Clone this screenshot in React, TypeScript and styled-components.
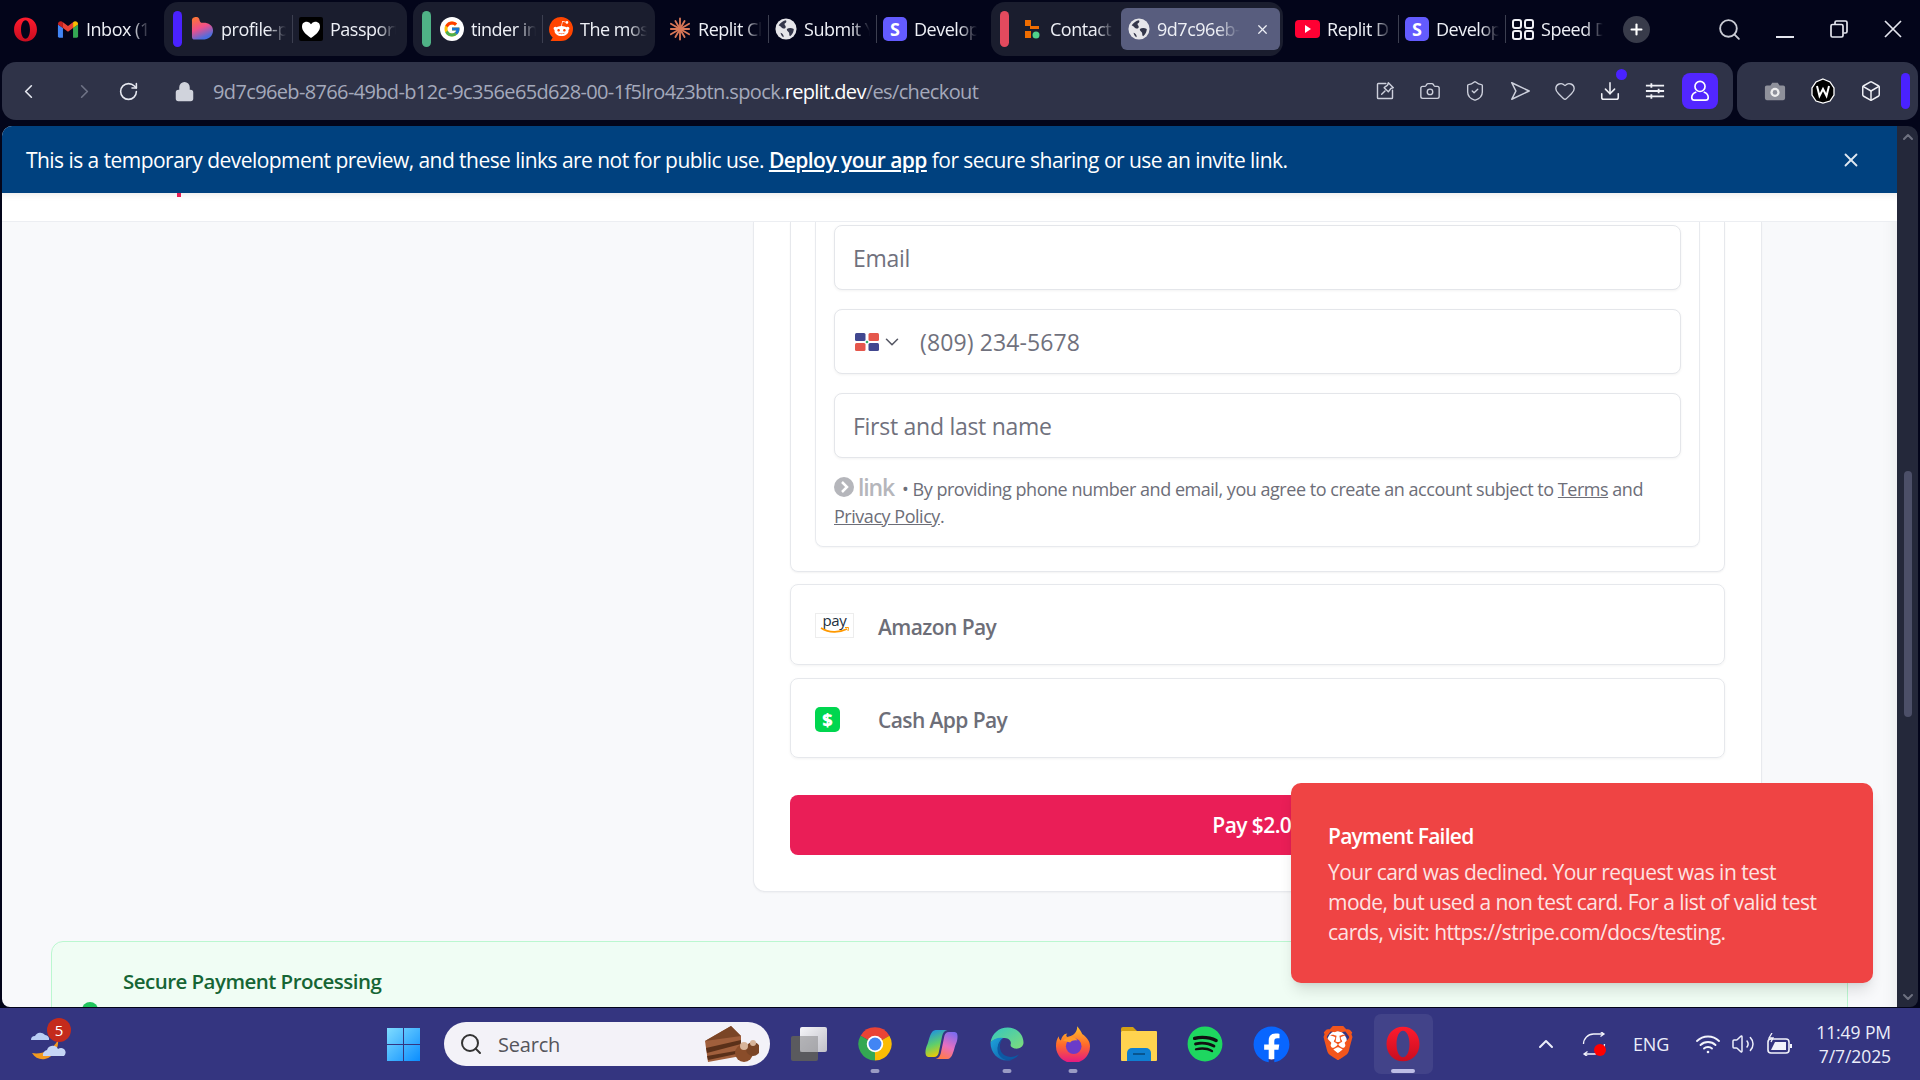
import React from "react";
import styled, { createGlobalStyle } from "styled-components";
import { ChevronLeft, ChevronRight, RotateCw, Lock, Camera, ShieldCheck, Heart, Download, X, Search, Box, ChevronUp, ChevronDown, Volume2, Plus } from "lucide-react";
import { FcGoogle } from "react-icons/fc";
import { FaRedditAlien, FaSpotify, FaFacebook } from "react-icons/fa";
import { SiBrave } from "react-icons/si";

const UI = `"Open Sans", "Noto Sans", sans-serif`;

const Global = createGlobalStyle`
  html, body { margin: 0; width: 1920px; height: 1080px; overflow: hidden; background: #03051a; }
  * { box-sizing: border-box; }
  #root { width: 1920px; height: 1080px; }
`;

const Win = styled.div`
  width: 1920px; height: 1080px; display: flex; flex-direction: column; background: #03051a;
  font-family: ${UI}; letter-spacing: -0.03em;
`;
const TabBar = styled.div`display: flex; align-items: center; height: 54px; margin-top: 2px; padding-left: 13px; flex: none;`;
const Group = styled.div<{ $w: number; $ml: number }>`
  display: flex; align-items: center; height: 54px; width: ${p => p.$w}px; margin-left: ${p => p.$ml}px;
  padding-left: 9px; background: #1a1d2e; border-radius: 14px; flex: none;
`;
const Accent = styled.span<{ $c: string; $mr: number }>`
  width: 9px; height: 36px; border-radius: 5px; background: ${p => p.$c}; margin-right: ${p => p.$mr}px; flex: none;
`;
const Label = styled.span<{ $w: number }>`
  display: block; width: ${p => p.$w}px; margin-left: 7px; font-size: 18px; color: #eef0f6; white-space: nowrap; overflow: hidden; flex: none;
  -webkit-mask-image: linear-gradient(90deg, #000 72%, transparent 100%);
  mask-image: linear-gradient(90deg, #000 72%, transparent 100%);
`;
const Sep = styled.span`width: 1px; height: 28px; background: #3c3f50; margin: 0 6px; flex: none;`;
const Tile = styled.span<{ $ml?: number }>`
  width: 24px; height: 24px; border-radius: 5px; background: #635bff; color: #fff; font-weight: 700; font-size: 18px; letter-spacing: 0;
  display: flex; align-items: center; justify-content: center; flex: none; margin-left: ${p => p.$ml ?? 0}px;
`;
const ActiveTab = styled.div`
  display: flex; align-items: center; width: 159px; height: 42px; margin-left: 7px; padding-left: 7px; background: #585d7e; border-radius: 6px; color: #fff; flex: none;
`;
const Spacer = styled.span<{ $w: number }>`width: ${p => p.$w}px; flex: none; display: block;`;
const PlusBtn = styled.span`
  width: 27px; height: 27px; border-radius: 50%; background: #383b4a; color: #fff; display: flex; align-items: center; justify-content: center; margin-left: 20px; flex: none;
`;
const WinCtl = styled.span<{ $ml: number }>`display: flex; align-items: center; justify-content: center; width: 26px; color: #e4e6ee; margin-left: ${p => p.$ml}px; flex: none;`;

const AddressRow = styled.div`display: flex; gap: 4px; height: 58px; margin-top: 6px; padding: 0 2px; flex: none;`;
const AddrBar = styled.div`
  width: 1731px; background: #2f3348; border-radius: 14px; display: flex; align-items: center; padding-left: 15px; color: #e6e8f0; flex: none;
`;
const NavIcon = styled.span<{ $ml: number; $c?: string }>`display: flex; margin-left: ${p => p.$ml}px; color: ${p => p.$c ?? "#e6e8f0"}; flex: none;`;
const Url = styled.div`margin-left: 18px; font-size: 20px; color: #a4a9bb; white-space: nowrap; letter-spacing: -0.032em;`;
const UrlHost = styled.span`color: #fff;`;
const Tools = styled.div`margin-left: auto; display: flex; align-items: center; padding-right: 15px;`;
const Slot = styled.span<{ $w?: number }>`position: relative; display: flex; align-items: center; justify-content: center; width: ${p => p.$w ?? 45}px; color: #cdd0dc; flex: none;`;
const Dot = styled.span`position: absolute; top: -11px; right: 5px; width: 11px; height: 11px; border-radius: 50%; background: #4a22ff;`;
const Profile = styled.span`width: 36px; height: 36px; margin-left: 5px; border-radius: 8px; background: #5226ff; color: #fff; display: flex; align-items: center; justify-content: center;`;
const SidePanel = styled.div`flex: 1; background: #2f3348; border-radius: 14px; display: flex; align-items: center; padding-left: 14px;`;
const SideBar = styled.span`width: 9px; height: 36px; border-radius: 5px; background: #4a22ff; margin-left: 6px;`;

const Viewport = styled.div`display: flex; height: 881px; margin: 6px 2px 1px; border-radius: 10px 10px 8px 8px; overflow: hidden; flex: none;`;
const Page = styled.div`position: relative; width: 1895px; height: 100%; background: #f8f9fb; overflow: hidden; flex: none; box-shadow: inset -18px 0 18px -18px rgba(0,0,0,.08);`;
const Banner = styled.div`
  height: 67px; background: #00417f; color: #fff; display: flex; align-items: center; justify-content: space-between; padding: 0 35px 0 24px;
  font-size: 21px; letter-spacing: -0.026em;
`;
const BannerLink = styled.span`font-weight: 600; text-decoration: underline;`;
const CloseBtn = styled.span`display: flex; color: #dfe7f1;`;
const Header = styled.div`height: 29px; background: #fff; border-bottom: 1px solid #eceef2; box-shadow: inset 0 8px 8px -8px rgba(0,0,0,.12);`;
const PinkMark = styled.span`display: block; width: 4px; height: 4px; margin-left: 175px; background: #e91e56;`;
const Main = styled.div`padding: 0 135px 0 751px;`;
const Card = styled.section`
  background: #fff; border: 1px solid #e8eaee; border-top: 0; border-radius: 0 0 12px 12px; padding: 0 36px 36px; box-shadow: 0 1px 2px rgba(0,0,0,.04);
`;
const MethodOpen = styled.div`border: 1px solid #e6e8ec; border-top: 0; border-radius: 0 0 8px 8px; padding: 0 24px 24px; box-shadow: 0 1px 2px rgba(0,0,0,.05);`;
const LinkBox = styled.div`border: 1px solid #e8eaee; border-top: 0; border-radius: 0 0 8px 8px; padding: 3px 18px 16px; box-shadow: 0 1px 2px rgba(0,0,0,.04);`;
const Field = styled.div`
  display: flex; align-items: center; height: 65px; padding-left: 18px; margin-bottom: 19px; border: 1px solid #e4e6ea; border-radius: 8px;
  background: #fff; color: #70717d; font-size: 23px; letter-spacing: -0.012em; box-shadow: 0 1px 3px rgba(0,0,0,.05);
`;
const PhoneText = styled.span`letter-spacing: 0.005em;`;
const FlagBox = styled.span`display: flex; align-items: center; gap: 2px; margin: 0 17px 0 2px; color: #555764;`;
const Legal = styled.div`margin-top: -1px; font-size: 18px; line-height: 27px; color: #6d6e78; letter-spacing: -0.026em;`;
const LinkLogo = styled.span`display: inline-flex; align-items: center; gap: 4px; font-size: 23px; font-weight: 600; color: #b5b6bb; vertical-align: -1px; margin-right: 8px; letter-spacing: -0.05em; line-height: 20px;`;
const Under = styled.span`text-decoration: underline;`;
const PayRow = styled.div<{ $h: number; $mt: number }>`
  display: flex; align-items: center; height: ${p => p.$h}px; margin-top: ${p => p.$mt}px; padding: 4px 0 0 24px; border: 1px solid #e6e8ec; border-radius: 8px;
  color: #6d6e78; font-size: 21px; font-weight: 600; letter-spacing: -0.028em; box-shadow: 0 1px 3px rgba(0,0,0,.05);
`;
const PayIcon = styled.span`width: 63px; display: flex; flex: none; margin-top: -2px;`;
const AmazonMark = styled.span`
  width: 39px; height: 25px; border: 1px solid #ededed; display: flex; flex-direction: column; align-items: center; font-size: 15px; font-weight: 400; line-height: 13px; color: #232f3e; letter-spacing: -0.02em;
`;
const CashMark = styled.span`
  width: 25px; height: 25px; border-radius: 5px; background: #00d64f; color: #fff; font-weight: 800; font-size: 18px; display: flex; align-items: center; justify-content: center; letter-spacing: 0;
`;
const PayBtn = styled.div`
  height: 60px; margin-top: 37px; border-radius: 8px; background: #ea1e57; color: #fff; font-size: 21px; font-weight: 600; display: flex; align-items: center; justify-content: center; letter-spacing: -0.028em;
`;
const Secure = styled.div`margin: 49px 49px 0; height: 200px; background: #f0fdf4; border: 1px solid #bbf7d0; border-radius: 12px; padding: 25px 0 0 71px; color: #166534; font-size: 20.5px; font-weight: 600; letter-spacing: -0.026em;`;
const SecureDot = styled.span`display: block; width: 16px; height: 16px; border-radius: 50%; background: #22c55e; margin: 7px 0 0 -41px;`;
const Toast = styled.div`
  position: absolute; right: 24px; bottom: 24px; width: 582px; height: 200px; padding: 38px 48px 36px 37px; border-radius: 10px; background: #ef4444; color: #fff; font-size: 21px; line-height: 30px;
  box-shadow: 0 10px 15px -3px rgba(0,0,0,.12), 0 4px 6px -4px rgba(0,0,0,.1); letter-spacing: -0.035em;
`;
const ToastTitle = styled.div`font-weight: 600; margin-bottom: 6px;`;
const ToastBody = styled.div`color: #fde3e3; letter-spacing: -0.025em;`;
const Scrollbar = styled.div`width: 21px; background: #24283a; display: flex; flex-direction: column; align-items: center; color: #6e7180; padding-top: 3px; flex: none; position: relative;`;
const Thumb = styled.span`display: block; width: 8px; height: 246px; border-radius: 4px; background: #4c4f68; margin-top: 326px; margin-bottom: 272px;`;

const Taskbar = styled.div`display: flex; align-items: center; height: 72px; background: #343580; padding: 0 29px 0 30px; color: #eceefa; flex: none;`;
const Weather = styled.span`position: relative; display: flex; width: 36px; height: 36px; margin-right: 320px; flex: none;`;
const Badge = styled.span`
  position: absolute; left: 17px; top: -8px; width: 24px; height: 24px; border-radius: 50%; background: #c42b1c; color: #fff; font-size: 15px; display: flex; align-items: center; justify-content: center; letter-spacing: 0;
`;
const SearchPill = styled.div`
  width: 326px; height: 44px; margin-left: 23px; border-radius: 22px; background: #f3f2f8; color: #55555b; display: flex; align-items: center; padding: 0 11px 0 15px; gap: 15px; font-size: 20px; letter-spacing: -0.01em; flex: none;
`;
const Cake = styled.span`margin-left: auto; display: flex;`;
const Dock = styled.div`display: flex; align-items: center; margin-left: 6px;`;
const DockItem = styled.span<{ $active?: boolean; $run?: boolean }>`
  position: relative; display: flex; align-items: center; justify-content: center; width: 66px; height: 60px; flex: none;
  &::before { content: ""; display: ${p => p.$active ? "block" : "none"}; position: absolute; left: 4px; right: 3px; top: 0; bottom: 0; border-radius: 7px; background: rgba(255,255,255,.07); }
  &::after { content: ""; display: ${p => p.$run || p.$active ? "block" : "none"}; position: absolute; bottom: 1px; left: 50%; transform: translateX(-50%); width: ${p => p.$active ? 24 : 9}px; height: 4px; border-radius: 2px; background: ${p => p.$active ? "#bdbde6" : "#9a9bc4"}; }
  & > svg { position: relative; }
`;
const Tray = styled.div`margin-left: auto; display: flex; align-items: center;`;
const TrayItem = styled.span<{ $w: number }>`position: relative; display: flex; justify-content: center; width: ${p => p.$w}px; flex: none; font-size: 18px; letter-spacing: -0.01em;`;
const RedDot = styled.span`position: absolute; right: 7px; bottom: 0; width: 12px; height: 12px; border-radius: 50%; background: #f00;`;
const Clock = styled.div`margin-left: 10px; width: 80px; text-align: right; font-size: 17.5px; line-height: 24px; letter-spacing: -0.005em; white-space: nowrap;`;

const OperaO = ({ s = 25, id = "op" }: { s?: number; id?: string }) => (
  <svg width={s} height={s} viewBox="0 0 24 24" style={{ flex: "none" }}>
    <defs><linearGradient id={id} x1="0" y1="0" x2="0" y2="1"><stop offset="0" stopColor="#ff1b2d"/><stop offset="1" stopColor="#c80d20"/></linearGradient></defs>
    <path fillRule="evenodd" fill={`url(#${id})`} d="M12 0.5C5.500 0.500 1 5.600 1 12S5.500 23.500 12 23.500 23 18.400 23 12 18.500 0.500 12 0.500zM12 3.200C9.500 3.200 7.700 7 7.700 12S9.500 20.800 12 20.800 16.300 17 16.300 12 14.500 3.200 12 3.200z"/>
  </svg>
);
const Gmail = () => (
  <svg width="22" height="22" viewBox="0 0 24 24" style={{ flex: "none" }}>
    <path fill="#4285f4" d="M1 7v13a1.500 1.500 0 0 0 1.500 1.500H6.500V11z"/><path fill="#34a853" d="M17.500 11v10.500h4A1.500 1.500 0 0 0 23 20V7z"/>
    <path fill="#ea4335" d="M6.500 11 12 15l5.500-4V4.500L12 8.800 6.500 4.500z"/><path fill="#c5221f" d="M1 7c0-3 3-4.500 5.500-2.500V11z"/><path fill="#fbbc04" d="M23 7c0-3-3-4.500-5.500-2.500V11z"/>
  </svg>
);
const GradHeart = () => (
  <svg width="23" height="24" viewBox="0 0 24 24" style={{ flex: "none" }}>
    <defs><linearGradient id="gh" x1="0" y1="0" x2="0.4" y2="1"><stop offset="0" stopColor="#ff7a2a"/><stop offset=".55" stopColor="#ef4f8a"/><stop offset="1" stopColor="#4a6ee0"/></linearGradient></defs>
    <path fill="url(#gh)" d="M1 4a4 4 0 0 1 8-1c.5 1.500 1 2.500 3 2.500 5-.5 11 2 11 8 0 6-5 9.500-11 9.500H4a3 3 0 0 1-3-3z"/>
  </svg>
);
const Passport = () => (
  <svg width="24" height="24" viewBox="0 0 24 24" style={{ flex: "none" }}><rect width="24" height="24" rx="2" fill="#000"/><path fill="#fff" d="M12 21C6 17 3 13.500 3 9.500a4.800 4.800 0 0 1 9-2.300 4.800 4.800 0 0 1 9 2.300C21 13.500 18 17 12 21z"/></svg>
);
const GoogleIc = () => (
  <svg width="24" height="24" viewBox="0 0 24 24" style={{ flex: "none" }}><circle cx="12" cy="12" r="12" fill="#fff"/><foreignObject x="3" y="3" width="18" height="18"><FcGoogle size={18} /></foreignObject></svg>
);
const Reddit = () => (
  <svg width="24" height="24" viewBox="0 0 24 24" style={{ flex: "none" }}><path fill="#ff4500" d="M12 0a12 12 0 0 1 0 24H1.500l2.200-3.500A12 12 0 0 1 12 0z"/><foreignObject x="4" y="3" width="17" height="17"><FaRedditAlien size={17} color="#fff" /></foreignObject></svg>
);
const Sunburst = () => (
  <svg width="22" height="24" viewBox="0 0 24 24" style={{ flex: "none" }}>
    {Array.from({ length: 12 }).map((_, i) => {
      const a = (i / 12) * Math.PI * 2;
      const r = i % 2 ? 11.5 : 10;
      return <line key={i} x1="12" y1="12" x2={12 + Math.cos(a) * r} y2={12 + Math.sin(a) * r} stroke="#d97757" strokeWidth="2" strokeLinecap="round" />;
    })}
  </svg>
);
const Globe = () => (
  <svg width="22" height="22" viewBox="0 0 24 24" style={{ flex: "none" }}>
    <circle cx="12" cy="12" r="11.500" fill="#e6e6ea"/>
    <path fill="#33364a" d="M4 8c2-3 5-5 8-5.500 1 1.500 0 3-1.500 3.500-.5 2 2 2.500 1 4.500-1.500 2-4 .5-5-1zM13 12c2-1.500 5-1.500 7.500 0 0 3-1.500 6-4 8-1.500-1-.5-3-1.500-4.500-1-1.500-2.500-1.500-2-3.500zM6 16c2 .5 3.500 2 3.500 5-1.500-.5-3-2.500-3.500-5z"/>
  </svg>
);
const ContactIc = () => (
  <svg width="16" height="24" viewBox="0 0 16 24" style={{ flex: "none" }}>
    <rect x="1" y="3" width="6" height="6" fill="#ef6c00"/><rect x="6" y="9" width="9" height="3" fill="#ef6c00"/><rect x="1" y="14" width="6" height="7" fill="#ef6c00"/><circle cx="12" cy="18" r="3.500" fill="#4fd18b"/>
  </svg>
);
const YT = () => (
  <svg width="25" height="24" viewBox="0 0 25 24" style={{ flex: "none" }}><rect y="3" width="25" height="18" rx="4" fill="#ff0033"/><path d="M10 8l6 4-6 4z" fill="#fff"/></svg>
);
const Speed = () => (
  <svg width="22" height="24" viewBox="0 0 22 24" fill="none" stroke="#f0f1f6" strokeWidth="2" style={{ flex: "none" }}>
    <rect x="1" y="3" width="8" height="8" rx="2"/><rect x="13" y="3" width="8" height="8" rx="2"/><rect x="1" y="14" width="8" height="8" rx="2"/><rect x="13" y="14" width="8" height="8" rx="2"/>
  </svg>
);
const PinBox = () => (
  <svg width="20" height="20" viewBox="0 0 24 24" fill="none" stroke="currentColor" strokeWidth="1.700" strokeLinejoin="round" strokeLinecap="round">
    <path d="M13 3H4a1 1 0 0 0-1 1v16a1 1 0 0 0 1 1h16a1 1 0 0 0 1-1v-9"/><path d="M8 16l4-4M16 2l6 6-3 1-3 4-5-5 4-3z"/>
  </svg>
);
const SendIc = () => (
  <svg width="22" height="22" viewBox="0 0 24 24" fill="none" stroke="currentColor" strokeWidth="1.700" strokeLinejoin="round"><path d="M3 3l19 9-19 9 4.500-9z"/></svg>
);
const Sliders = () => (
  <svg width="20" height="20" viewBox="0 0 22 22" fill="none" stroke="#f0f1f6" strokeWidth="2"><path d="M1 5h20M1 11h20M1 17h20M7 2.500v5M15 8.500v5M7 14.500v5"/></svg>
);
const UserIc = () => (
  <svg width="20" height="22" viewBox="0 0 20 24" fill="none" stroke="currentColor" strokeWidth="1.800"><circle cx="10" cy="7" r="5.500"/><path d="M6 13c-3 1-5 3-5 6 0 2 1.500 3 3 3h12c1.500 0 3-1 3-3 0-3-2-5-5-6"/></svg>
);
const CamSolid = () => (
  <svg width="22" height="22" viewBox="0 0 24 24"><path fill="#8f919b" d="M3 6h4l2-3h6l2 3h4a2 2 0 0 1 2 2v12a2 2 0 0 1-2 2H3a2 2 0 0 1-2-2V8a2 2 0 0 1 2-2z"/><circle cx="12" cy="13.500" r="5" fill="#eee"/><circle cx="12" cy="13.500" r="2.500" fill="#8f919b"/></svg>
);
const WBadge = () => (
  <svg width="24" height="26" viewBox="0 0 24 26"><path d="M12 1l7 3 4 6v7l-4 6-7 2-7-2-4-6v-7l4-6z" fill="#000" stroke="#fff" strokeWidth="1.300"/><path d="M6 8l2.500 10L12 11l3.500 7L18 8" fill="none" stroke="#fff" strokeWidth="2"/></svg>
);
const FlagDR = () => (
  <svg width="24" height="18" viewBox="0 0 24 18"><rect x="0" y="0" width="10.500" height="8" rx="1.500" fill="#41478f"/><rect x="13.500" y="0" width="10.500" height="8" rx="1.500" fill="#e5574c"/><rect x="0" y="10" width="10.500" height="8" rx="1.500" fill="#e5574c"/><rect x="13.500" y="10" width="10.500" height="8" rx="1.500" fill="#41478f"/><circle cx="12" cy="9" r="1.300" fill="#2fb06a"/></svg>
);
const LinkCircle = () => (
  <svg width="20" height="20" viewBox="0 0 20 20"><circle cx="10" cy="10" r="10" fill="#b5b6bb"/><path d="M8 5l5 5-5 5" fill="none" stroke="#fff" strokeWidth="2.500"/></svg>
);
const AmazonArrow = () => (
  <svg width="30" height="7" viewBox="0 0 30 7"><path d="M1 1c8 5 18 5 26 1" fill="none" stroke="#ff9900" strokeWidth="1.600"/><path d="M25 .500l3.500 0-.5 3.500" fill="none" stroke="#ff9900" strokeWidth="1"/></svg>
);
const WeatherIc = () => (
  <svg width="36" height="34" viewBox="0 0 36 34">
    <path d="M28 14c1 8-4 17-13 19-5 1-10-1-13-6 8 2 20-2 26-13z" fill="#f29a1f"/>
    <path d="M1 14a4 4 0 0 1 4-4 6 6 0 0 1 10-1 4 4 0 0 1 4 5z" fill="#b9cdf4"/>
    <path d="M13 30a5 5 0 0 1 4-6 6 6 0 0 1 11-1 4.500 4.500 0 0 1 6 7z" fill="#c5d6f6"/>
  </svg>
);
const WinLogo = () => (
  <svg width="35" height="35" viewBox="0 0 35 35" style={{ flex: "none" }}>
    <defs><linearGradient id="wl" x1="0" y1="0" x2="1" y2="1"><stop offset="0" stopColor="#7fdcff"/><stop offset="1" stopColor="#0a8dff"/></linearGradient></defs>
    <path fill="url(#wl)" d="M1 1h16v16H1zM18 1h16v16H18zM1 18h16v16H1zM18 18h16v16H18z"/>
  </svg>
);
const CakeIc = () => (
  <svg width="54" height="38" viewBox="0 0 54 38">
    <path d="M0 16 26 1l10 10v20L3 37z" fill="#a05f3c"/><path d="M0 16 26 1l10 10z" fill="#7a4526"/><path d="M1 23l35-8v4L2 28z" fill="#5a3019"/><path d="M2 31l34-6v3L3 35z" fill="#5a3019"/>
    <circle cx="39" cy="28" r="9" fill="#8a4d2a"/><circle cx="48" cy="24" r="7" fill="#7a4526"/><circle cx="39" cy="21" r="4" fill="#d7b49a"/><circle cx="48" cy="18" r="3" fill="#d7b49a"/>
  </svg>
);
const TaskView = () => (
  <svg width="36" height="34" viewBox="0 0 36 34">
    <defs><linearGradient id="tv" x1="0" y1="0" x2="1" y2="1"><stop offset="0" stopColor="#fff"/><stop offset="1" stopColor="#c8c8cc"/></linearGradient></defs>
    <rect x="0" y="9" width="27" height="25" rx="2" fill="#5a5a5e"/><rect x="9" y="0" width="27" height="25" rx="2" fill="url(#tv)" opacity=".95"/><rect x="9" y="9" width="18" height="16" fill="#8e8e92" opacity=".6"/>
  </svg>
);
const Chrome = () => (
  <svg width="36" height="36" viewBox="0 0 24 24">
    <path fill="#ea4335" d="M12 12 21.600 6.500A11 11 0 0 0 2.400 6.500z"/><path fill="#fbbc04" d="M12 12 21.600 6.500A11 11 0 0 1 12 23z"/><path fill="#34a853" d="M12 12V23A11 11 0 0 1 2.400 6.500z"/>
    <circle cx="12" cy="12" r="5.500" fill="#fff"/><circle cx="12" cy="12" r="4.300" fill="#4285f4"/>
  </svg>
);
const Copilot = () => (
  <svg width="35" height="35" viewBox="0 0 24 24">
    <defs>
      <linearGradient id="c1" x1="0.2" y1="0" x2="0.5" y2="1"><stop offset="0" stopColor="#1a8fe8"/><stop offset=".55" stopColor="#5fcf6a"/><stop offset="1" stopColor="#f5c800"/></linearGradient>
      <linearGradient id="c2" x1="0.8" y1="0" x2="0.4" y2="1"><stop offset="0" stopColor="#7b6bf0"/><stop offset=".55" stopColor="#e86fc0"/><stop offset="1" stopColor="#ff7a4c"/></linearGradient>
    </defs>
    <path fill="url(#c1)" d="M8 2h8c-2 .5-3 2-3.500 4L10 18c-.5 1.500-1.500 2.500-3 2.500H3c-1.500 0-2-1.500-2-3 0-2 .5-4 1.500-6C3.500 8.500 4.500 2 8 2z"/>
    <path fill="url(#c2)" d="M16 22H8c2-.5 3-2 3.500-4L14 6c.5-1.500 1.500-2.500 3-2.500h4c1.500 0 2 1.500 2 3 0 2-.5 4-1.500 6-1 3-2 9.500-5.500 9.500z"/>
  </svg>
);
const Edge = () => (
  <svg width="36" height="36" viewBox="0 0 24 24">
    <defs>
      <linearGradient id="e1" x1="0" y1="0" x2="1" y2="1"><stop offset="0" stopColor="#33c6c0"/><stop offset="1" stopColor="#7fdc7a"/></linearGradient>
      <linearGradient id="e2" x1="0" y1="0" x2="1" y2="1"><stop offset="0" stopColor="#1ea4dd"/><stop offset="1" stopColor="#0c59a4"/></linearGradient>
    </defs>
    <path fill="url(#e1)" d="M1 11C2 5 6.500 1 12.500 1 18.500 1 23 5.500 23 11c0 3-3 4.500-6 4-2-.5-3-1.500-2.500-3 .5-1.500-1-4-4-4C6 8 3 9 1 11z"/>
    <path fill="url(#e2)" d="M1 11c2-2.500 5-3.500 8.500-3-3 2-4.500 6-3 10 1.500 3.500 5 5 9 4.500-1.500.5-2.500.5-3.500.5C6 23 1 18 1 11z"/>
    <path fill="#0c59a4" d="M9.500 8c-2 2-3 6-1.500 9 2 3.500 7 5 12 2-1.500 2-3.500 3-5.500 3.500-3.500.5-7-1-8.500-4.500C5 14 6.500 10 9.500 8z"/>
  </svg>
);
const Firefox = () => (
  <svg width="34" height="36" viewBox="0 0 24 25">
    <defs><linearGradient id="ff" x1="0.5" y1="0" x2="0.5" y2="1"><stop offset="0" stopColor="#ffc32c"/><stop offset=".5" stopColor="#ff6a2b"/><stop offset="1" stopColor="#e31587"/></linearGradient></defs>
    <path fill="url(#ff)" d="M15 0c2 2.500 3 4 3.500 5.500C22 8 24 11 24 14a12 12 0 0 1-24 0c0-3 .5-5 2-7 0 1.500.5 2.500 1.500 3C4 7 6 5 8 5c-1 1-1 2 0 2.500 3-.5 7-2 7-7.500z"/>
    <circle cx="12.500" cy="14" r="5.500" fill="#6a3bc9"/><path d="M5 10c2-2 5-3 8-2 1 .500 2 1 2 2-2-.5-4 0-5 1.500z" fill="#ff9a2b"/>
  </svg>
);
const Folder = () => (
  <svg width="36" height="34" viewBox="0 0 36 34">
    <path d="M0 2a2 2 0 0 1 2-2h10l4 4h-16z" fill="#d4a012"/><rect x="0" y="4" width="36" height="30" rx="1" fill="#ffd34f"/><path d="M6 34v-8a5 5 0 0 1 5-5h14a5 5 0 0 1 5 5v8z" fill="#0f7fd1"/><rect x="12" y="26" width="12" height="2" fill="#08558f"/>
  </svg>
);
const Spotify = () => (
  <svg width="36" height="36" viewBox="0 0 36 36"><circle cx="18" cy="18" r="15" fill="#111"/><foreignObject width="36" height="36"><FaSpotify size={36} color="#1ed760" /></foreignObject></svg>
);
const Fb = () => (
  <svg width="37" height="37" viewBox="0 0 37 37"><circle cx="18.500" cy="18.500" r="15" fill="#fff"/><foreignObject width="37" height="37"><FaFacebook size={37} color="#0866ff" /></foreignObject></svg>
);
const Brave = () => (
  <svg width="32" height="36" viewBox="0 0 32 36"><ellipse cx="16" cy="16" rx="10" ry="11" fill="#fff"/><foreignObject width="32" height="36"><SiBrave size={34} color="#f2551c" /></foreignObject></svg>
);
const Sync = () => (
  <svg width="24" height="24" viewBox="0 0 24 24" fill="none" stroke="#f2f3fb" strokeWidth="1.300"><path d="M1.500 12A10 10 0 0 1 11.500 2H22M18.500-.5l3.500 2.500-3.500 2.500M22.500 12a10 10 0 0 1-10 10H2M5.500 19.500 2 22l3.500 2.500"/></svg>
);
const WifiIc = () => (
  <svg width="24" height="20" viewBox="0 0 24 20" fill="none" stroke="#f2f3fb" strokeWidth="1.800" strokeLinecap="round"><path d="M1 7c6-6 16-6 22 0M4.500 11c4-4 11-4 15 0M8 14.500c2-2 6-2 8 0"/><circle cx="12" cy="18" r="1.300" fill="#f2f3fb" stroke="none"/></svg>
);
const BatteryIc = () => (
  <svg width="26" height="22" viewBox="0 0 26 22" fill="none" stroke="#f2f3fb" strokeWidth="1.600"><rect x="1" y="6" width="21" height="14" rx="3"/><rect x="23" y="11" width="2" height="4" fill="#f2f3fb" stroke="none"/><path d="M4 17l4-8h11v8z" fill="#f2f3fb" stroke="none"/><path d="M5 0L2 5h4L4 9" strokeWidth="1.300"/></svg>
);

export default function App() {
  return (
    <>
      <Global />
      <Win>
        <TabBar>
          <OperaO id="op1" />
          <Spacer $w={19} />
          <Gmail /><Label $w={64}>Inbox (1)</Label>
          <Group $w={243} $ml={14}>
            <Accent $c="#4a22ff" $mr={9} />
            <GradHeart /><Label $w={65}>profile-page</Label><Sep />
            <Passport /><Label $w={66}>Passport</Label>
          </Group>
          <Group $w={242} $ml={6}>
            <Accent $c="#4fb286" $mr={9} />
            <GoogleIc /><Label $w={65}>tinder in</Label><Sep />
            <Reddit /><Label $w={67}>The most</Label>
          </Group>
          <Spacer $w={14} />
          <Sunburst /><Label $w={64}>Replit Cl</Label><Sep />
          <Globe /><Label $w={66}>Submit Y</Label><Sep />
          <Tile>S</Tile><Label $w={63}>Develop</Label>
          <Group $w={292} $ml={14}>
            <Accent $c="#e24a5e" $mr={15} />
            <ContactIc /><Spacer $w={3} /><Label $w={64}>Contact</Label>
            <ActiveTab>
              <Globe /><Label $w={83}>9d7c96eb-8</Label>
              <Spacer $w={15} /><X size={15} color="#eef0f6" />
            </ActiveTab>
          </Group>
          <Spacer $w={12} />
          <YT /><Spacer $w={-2} /><Label $w={65}>Replit D</Label><Sep />
          <Tile>S</Tile><Label $w={63}>Develop</Label><Sep />
          <Speed /><Label $w={62}>Speed D</Label>
          <PlusBtn><Plus size={17} strokeWidth={3} /></PlusBtn>
          <WinCtl $ml={66}><Search size={25} color="#c9cbd4" strokeWidth={1.800} /></WinCtl>
          <WinCtl $ml={30}><svg width="18" height="20" viewBox="0 0 18 20"><rect y="17" width="18" height="2" fill="#e4e6ee" /></svg></WinCtl>
          <WinCtl $ml={28}><svg width="18" height="18" viewBox="0 0 18 18" fill="none" stroke="#e4e6ee" strokeWidth="1.700"><rect x="1" y="4.500" width="12" height="12.500" rx="1.500" /><path d="M5 4V2.500A1.500 1.500 0 0 1 6.500 1H15.500A1.500 1.500 0 0 1 17 2.500V11.500A1.500 1.500 0 0 1 15.500 13H13.500" /></svg></WinCtl>
          <WinCtl $ml={28}><svg width="18" height="18" viewBox="0 0 18 18" stroke="#e4e6ee" strokeWidth="1.700"><path d="M1 1l16 16M17 1L1 17" /></svg></WinCtl>
        </TabBar>
        <AddressRow>
          <AddrBar>
            <NavIcon $ml={0}><ChevronLeft size={23} strokeWidth={1.700} /></NavIcon>
            <NavIcon $ml={33} $c="#6f7386"><ChevronRight size={23} strokeWidth={1.700} /></NavIcon>
            <NavIcon $ml={22}><RotateCw size={21} strokeWidth={1.800} /></NavIcon>
            <NavIcon $ml={35} $c="#d0d3dc"><Lock size={21} fill="#d0d3dc" strokeWidth={2} /></NavIcon>
            <Url>9d7c96eb-8766-49bd-b12c-9c356e65d628-00-1f5lro4z3btn.spock.<UrlHost>replit.dev</UrlHost>/es/checkout</Url>
            <Tools>
              <Slot><PinBox /></Slot>
              <Slot><Camera size={22} strokeWidth={1.500} /></Slot>
              <Slot><ShieldCheck size={22} strokeWidth={1.500} /></Slot>
              <Slot><SendIc /></Slot>
              <Slot><Heart size={22} strokeWidth={1.500} /></Slot>
              <Slot><Download size={22} strokeWidth={1.700} color="#f0f1f6" /><Dot /></Slot>
              <Slot><Sliders /></Slot>
              <Profile><UserIc /></Profile>
            </Tools>
          </AddrBar>
          <SidePanel>
            <Slot $w={48}><CamSolid /></Slot>
            <Slot $w={48}><WBadge /></Slot>
            <Slot $w={48}><Box size={22} strokeWidth={1.600} color="#f0f1f6" /></Slot>
            <SideBar />
          </SidePanel>
        </AddressRow>
        <Viewport>
          <Page>
            <Banner>
              <span>This is a temporary development preview, and these links are not for public use. <BannerLink>Deploy your app</BannerLink> for secure sharing or use an invite link.</span>
              <CloseBtn><X size={22} /></CloseBtn>
            </Banner>
            <Header><PinkMark /></Header>
            <Main>
              <Card>
                <MethodOpen>
                  <LinkBox>
                    <Field>Email</Field>
                    <Field><FlagBox><FlagDR /><ChevronDown size={22} strokeWidth={1.700} /></FlagBox><PhoneText>(809) 234-5678</PhoneText></Field>
                    <Field>First and last name</Field>
                    <Legal>
                      <LinkLogo><LinkCircle />link</LinkLogo>• By providing phone number and email, you agree to create an account subject to <Under>Terms</Under> and <Under>Privacy Policy</Under>.
                    </Legal>
                  </LinkBox>
                </MethodOpen>
                <PayRow $h={81} $mt={12}>
                  <PayIcon><AmazonMark>pay<AmazonArrow /></AmazonMark></PayIcon>Amazon Pay
                </PayRow>
                <PayRow $h={80} $mt={13}>
                  <PayIcon><CashMark>$</CashMark></PayIcon>Cash App Pay
                </PayRow>
                <PayBtn>Pay $2.00</PayBtn>
              </Card>
            </Main>
            <Secure>Secure Payment Processing<SecureDot /></Secure>
            <Toast>
              <ToastTitle>Payment Failed</ToastTitle>
              <ToastBody>Your card was declined. Your request was in test mode, but used a non test card. For a list of valid test cards, visit: https://stripe.com/docs/testing.</ToastBody>
            </Toast>
          </Page>
          <Scrollbar>
            <ChevronUp size={16} strokeWidth={3} />
            <Thumb />
            <ChevronDown size={16} strokeWidth={3} />
          </Scrollbar>
        </Viewport>
        <Taskbar>
          <Weather><WeatherIc /><Badge>5</Badge></Weather>
          <WinLogo />
          <SearchPill>
            <Search size={24} strokeWidth={2} color="#333" />Search<Cake><CakeIc /></Cake>
          </SearchPill>
          <Dock>
            <DockItem><TaskView /></DockItem>
            <DockItem $run><Chrome /></DockItem>
            <DockItem><Copilot /></DockItem>
            <DockItem $run><Edge /></DockItem>
            <DockItem $run><Firefox /></DockItem>
            <DockItem><Folder /></DockItem>
            <DockItem><Spotify /></DockItem>
            <DockItem><Fb /></DockItem>
            <DockItem><Brave /></DockItem>
            <DockItem $active><OperaO s={36} id="op2" /></DockItem>
          </Dock>
          <Tray>
            <TrayItem $w={58}><ChevronUp size={24} strokeWidth={2} /></TrayItem>
            <TrayItem $w={38}><Sync /><RedDot /></TrayItem>
            <TrayItem $w={76}>ENG</TrayItem>
            <TrayItem $w={38}><WifiIc /></TrayItem>
            <TrayItem $w={32}><Volume2 size={24} strokeWidth={1.500} /></TrayItem>
            <TrayItem $w={42}><BatteryIc /></TrayItem>
            <Clock>11:49 PM<br />7/7/2025</Clock>
          </Tray>
        </Taskbar>
      </Win>
    </>
  );
}
